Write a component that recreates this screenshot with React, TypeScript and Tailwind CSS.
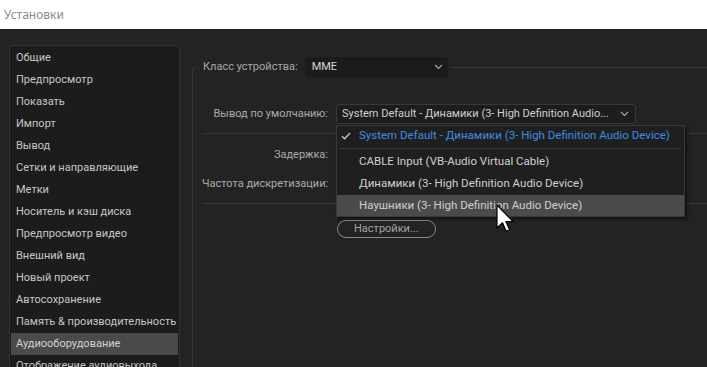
const sections = [
  "Общие",
  "Предпросмотр",
  "Показать",
  "Импорт",
  "Вывод",
  "Сетки и направляющие",
  "Метки",
  "Носитель и кэш диска",
  "Предпросмотр видео",
  "Внешний вид",
  "Новый проект",
  "Автосохранение",
  "Память & производительность",
  "Аудиооборудование",
  "Отображение аудиовыхода",
];

const outputs = [
  "CABLE Input (VB-Audio Virtual Cable)",
  "Динамики (3- High Definition Audio Device)",
  "Наушники (3- High Definition Audio Device)",
];

function Chevron() {
  return (
    <svg width="9" height="6" viewBox="0 0 9 6" className="shrink-0">
      <path d="M1 1l3.5 3.5L8 1" fill="none" stroke="#a8a8a8" strokeWidth="1.1" />
    </svg>
  );
}

function Cursor() {
  return (
    <svg width="20" height="30" viewBox="0 0 20 30" className="absolute left-[159px] top-[78px]">
      <path
        d="M1 1 L1 24 L6.5 18.8 L10.2 27.2 L13.6 25.7 L9.9 17.5 L17 17.5 Z"
        fill="#fff"
        stroke="#000"
        strokeWidth="1.2"
        strokeLinejoin="round"
      />
    </svg>
  );
}

function FormRow({ label, children }: { label: string; children?: React.ReactNode }) {
  return (
    <div className="flex h-5 items-center gap-2">
      <span className="w-[126px] shrink-0 text-right text-[#acacac]">{label}</span>
      {children}
    </div>
  );
}

export default function App() {
  return (
    <div className="h-[367px] w-[707px] overflow-hidden whitespace-nowrap font-['Roboto',sans-serif] text-[11px]">
      <div className="flex h-[29px] items-center bg-white pl-1 font-['Noto_Sans',sans-serif] text-[12px] text-[#8c8c8c]">
        Установки
      </div>

      <div className="flex h-[338px] bg-[#232323] pl-[9px] pt-4">
        <ul className="h-[340px] w-[171px] shrink-0 rounded-[3px] border border-[#313131] bg-[#1c1c1c] p-px">
          {sections.map((s) => (
            <li
              key={s}
              className={
                s === "Аудиооборудование"
                  ? "flex h-[22px] items-center bg-[#4a4a4a] px-[5px] text-[#d2d2d2]"
                  : "flex h-[22px] items-center px-[5px] text-[#c6c6c6]"
              }
            >
              {s}
            </li>
          ))}
        </ul>

        <div className="ml-3 flex-1 pt-3">
          <fieldset className="h-[320px] rounded-tl-[3px] border border-r-0 border-[#363636]">
            <legend className="ml-1 pl-1.5 pr-0.5">
              <div className="flex h-5 items-center gap-[7px]">
                <span className="text-[#a8a8a8]">Класс устройства:</span>
                <div className="flex h-5 w-[143px] items-center justify-between rounded-[3px] bg-[#1b1b1b] pl-[7px] pr-[5px] text-[#d6d6d6]">
                  MME
                  <Chevron />
                </div>
              </div>
            </legend>

            <div className="mt-[27px] pl-[9px]">
              <FormRow label="Вывод по умолчанию:">
                <div className="relative">
                  <div className="flex h-5 w-[300px] items-center justify-between rounded-[3px] border border-[#383838] bg-[#1d1d1d] pl-[5px] pr-[6px] text-[#d0d0d0]">
                    System Default - Динамики (3- High Definition Audio...
                    <Chevron />
                  </div>
                  <div className="absolute left-0 top-[21px] z-10 w-[349px] border border-[#3a3a3a] bg-[#1f1f1f] text-[11.5px] shadow-[2px_2px_3px_rgba(0,0,0,0.55)]">
                    <div className="flex h-5 items-center text-[#3d8ce3]">
                      <svg width="10" height="8" viewBox="0 0 10 8" className="ml-[4px] mr-[8px]">
                        <path d="M1 4.2l2.6 2.6L9 1" fill="none" stroke="#c8c8c8" strokeWidth="1.3" />
                      </svg>
                      System Default - Динамики (3- High Definition Audio Device)
                    </div>
                    <div className="mx-[3px] mt-[2px] border-t border-[#3a3a3a]" />
                    <div className="mt-[2px]">
                      {outputs.map((o, i) => (
                        <div
                          key={o}
                          className={
                            i === 2
                              ? "flex h-[21px] items-center bg-[#4b4b4b] pl-[22px] text-[#cfcfcf]"
                              : "flex h-[22px] items-center pl-[22px] text-[#cfcfcf]"
                          }
                        >
                          {o}
                        </div>
                      ))}
                    </div>
                    <Cursor />
                  </div>
                </div>
              </FormRow>
              <div className="mt-[9px] border-t border-[#363636]" />
              <div className="mt-[11px]">
                <FormRow label="Задержка:" />
              </div>
              <div className="mt-[9px]">
                <FormRow label="Частота дискретизации:" />
              </div>
              <div className="mt-[9px] border-t border-[#363636]" />
              <div className="ml-[135px] mt-4 flex h-[18px] w-[99px] items-center rounded-full border border-[#8a8a8a] pl-[16px] text-[#a4a4a4]">
                Настройки...
              </div>
            </div>
          </fieldset>
        </div>
      </div>
    </div>
  );
}
